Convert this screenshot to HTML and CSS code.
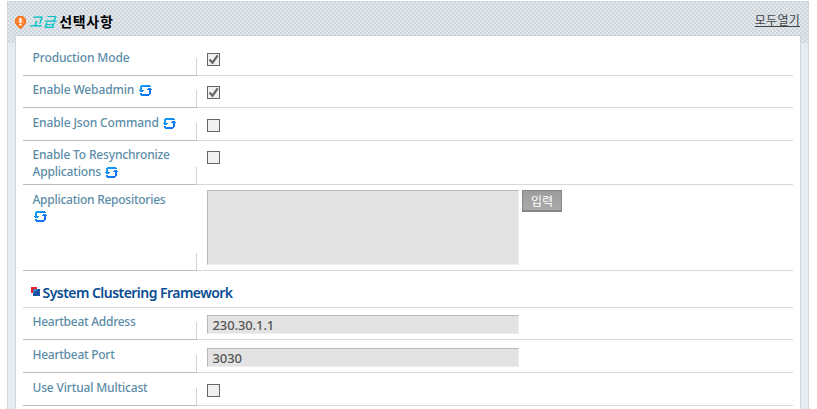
FILE: index.html
```html
<!DOCTYPE html>
<html lang="ko">
<head>
<meta charset="utf-8">
<title>고급 선택사항</title>
<link rel="stylesheet" href="styles.css">
</head>
<body>
<svg class="defs" width="0" height="0">
  <defs>
    <linearGradient id="blue" x1="0" y1="0" x2="1" y2="1"><stop offset="0" stop-color="#16a8f5"/><stop offset="1" stop-color="#0a62f8"/></linearGradient>
    <symbol id="sync" viewBox="0 0 13 11"><path fill="url(#blue)" d="M2 0h9v1h1v1H3v3h2v1H4v1H1V6H0V5h1V1h1zM9 3h3v1h1v1h-1v4h-1v1h-1v1H2v-1H1V8h2v1h7V5H8V4h1z"/></symbol>
  </defs>
</svg>
<section class="panel">
  <header class="head">
    <svg class="pin" width="11" height="13" viewBox="0 0 11 13"><path d="M3.500 .7h4l2.800 2.800v3.600L7.500 10.300l-2 2-2-2L.7 7.100V3.500z" fill="#ff8a3c" stroke="#f57018" stroke-width="1.400"/><path d="M4.500 2h2v5h-2zM4.500 8h2v1.500h-2z" fill="#fff"/></svg>
    <h1><em>고급</em><span>선택사항</span></h1>
    <a class="open">모두열기</a>
  </header>
  <div class="body">
    <div class="row r1"><div class="label"><span class="t1">Production Mode</span></div><div class="value"><i class="check on"><svg width="11" height="11" viewBox="0 0 11 11"><path d="M1.500 5.500l3 3.200L9.700 1.300" fill="none" stroke="#666" stroke-width="2.200"/></svg></i></div></div>
    <div class="row r2"><div class="label"><span class="t2">Enable Webadmin</span><svg class="sync" width="13" height="11"><use href="#sync"/></svg></div><div class="value"><i class="check on"><svg width="11" height="11" viewBox="0 0 11 11"><path d="M1.500 5.500l3 3.200L9.700 1.300" fill="none" stroke="#666" stroke-width="2.200"/></svg></i></div></div>
    <div class="row r3"><div class="label"><span class="t3">Enable Json Command</span><svg class="sync" width="13" height="11"><use href="#sync"/></svg></div><div class="value"><i class="check"></i></div></div>
    <div class="row r4"><div class="label"><span class="t4">Enable To Resynchronize</span><br><span class="t5">Applications</span><svg class="sync" width="13" height="11"><use href="#sync"/></svg></div><div class="value"><i class="check"></i></div></div>
    <div class="row r5"><div class="label"><span class="t6">Application Repositories</span><br><svg class="sync first" width="13" height="11"><use href="#sync"/></svg></div><div class="value"><div class="area"></div><span class="btn">입력</span></div></div>
    <h2><svg width="9" height="9" viewBox="0 0 9 9"><path d="M0 0h6v2H2v4H0z" fill="#e8202c"/><path d="M2 2h7v7H2z" fill="#14539f"/><path d="M2 2h5L2 7z" fill="#3f7ec0"/></svg><span>System Clustering Framework</span></h2>
    <div class="row r6"><div class="label"><span class="t7">Heartbeat Address</span></div><div class="value"><div class="field">230.30.1.1</div></div></div>
    <div class="row r7"><div class="label"><span class="t8">Heartbeat Port</span></div><div class="value"><div class="field port">3030</div></div></div>
    <div class="row r8"><div class="label"><span class="t9">Use Virtual Multicast</span></div><div class="value"><i class="check"></i></div></div>
  </div>
</section>
</body>
</html>
```

FILE: styles.css
```css
* { box-sizing: border-box; }
body { margin: 0; height: 409px; overflow: hidden; background: #fff; font: 12px/17px "Noto Sans", "Noto Sans CJK KR", sans-serif; }
.defs { display: block; }
.panel { width: 802px; height: 408px; margin: 1px 0 0 7px; border: 1px solid #d0d7db; border-bottom: 0; padding: 0 7px;
  background: linear-gradient(#e7ecf0, #e7ecf0) 0 41px no-repeat, repeating-conic-gradient(#ced6dc 0 25%, #e3e8ec 0 50%) 0 0 / 4px 4px; }
.head { height: 33px; display: flex; align-items: flex-start; }
.pin { margin: 14px 0 0; flex: none; }
h1 { margin: 9px 0 0 3px; font: bold 14px/20px "Noto Sans CJK KR", sans-serif; display: flex; gap: 3px; color: #000; letter-spacing: .7px; }
h1 em { color: #00c3c8; font-weight: 500; }
.open { margin: 8px 1px 0 auto; font: 12px/20px "Noto Sans CJK KR", sans-serif; color: #444; text-decoration: underline; letter-spacing: .25px; }
.body { height: 374px; border: 1px solid #d0d7db; border-bottom: 0; background: #fff; padding: 7px 7px 0; overflow: hidden; }
.row { display: flex; }
.label { position: relative; width: 174px; padding: 6px 0 0 9.5px; border-bottom: 1px solid #bdbdbd; color: #5b8ca8; font-weight: 500; white-space: nowrap; }
.label::after { content: ""; position: absolute; right: 0; bottom: 0; width: 1px; height: 17px; background: #d2d2d2; }
.value { flex: 1; display: flex; align-items: flex-start; border-bottom: 1px solid #d8d8d8; padding: 10px 0 0 10px; }
.r1 { height: 33px; }
.r2 { height: 32px; }
.r3 { height: 33px; }
.r4 { height: 44px; }
.r5 { height: 86px; }
.r6 { height: 32px; }
.r7, .r8 { height: 33px; }
.r2 .label, .r4 .label, .r6 .label { padding-top: 5px; }
.r3 .value, .r8 .value { padding-top: 11px; }
.t1, .t2, .t3 { letter-spacing: -.12px; }
.t4, .t5, .t9 { letter-spacing: -.17px; }
.t6, .t7, .t8 { letter-spacing: -.26px; }
.sync { margin-left: 5px; vertical-align: -2px; }
.t3 + .sync, .t5 + .sync { margin-left: 4px; }
.first { margin-left: 1px; vertical-align: -1px; }
.check { width: 13px; height: 13px; border: 1px solid #666; background: #f0f0f0; display: block; }
.check svg { display: block; }
.area { width: 312px; height: 75px; background: #e3e3e3; border: 1px solid #eee; border-top-color: #b8b8b8; border-left-color: #b8b8b8; }
.r5 .value { padding-top: 5px; }
.btn { width: 40px; height: 22px; margin-left: 3px; border: 1px solid #858585; border-bottom-width: 2px; background: linear-gradient(#9d9d9d, #aaa); color: #fff; text-align: center; font: 12px/19px "Noto Sans CJK KR", sans-serif; }
h2 { margin: 0; height: 37px; border-bottom: 1px solid #d8d8d8; display: flex; align-items: flex-start; padding: 12px 0 0 8px; gap: 2.5px; font: 600 14px/20px "Noto Sans", sans-serif; color: #0a4d93; letter-spacing: -.54px; }
h2 svg { margin-top: 4px; }
h2 span { white-space: nowrap; }
.field { width: 312px; height: 19px; background: #e3e3e3; border: 1px solid #eee; border-top-color: #b8b8b8; border-left-color: #b8b8b8; padding-left: 4.500px; color: #555; font: 500 13px/19px "Noto Sans", sans-serif; letter-spacing: -.1px; }
.r6 .value { padding-top: 7px; }
.r7 .value { padding-top: 8px; }
```
